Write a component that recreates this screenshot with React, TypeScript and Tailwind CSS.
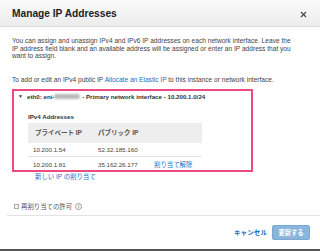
import { X } from 'lucide-react';

const sans = "font-['Liberation_Sans','Noto_Sans_CJK_JP',sans-serif]";

export default function App() {
  return (
    <div className={`w-[320px] h-[251px] bg-white flex flex-col overflow-hidden text-[#444] ${sans}`}>
      {/* Header */}
      <div className="h-[27px] shrink-0 flex items-center justify-between pl-[12px] pr-[12px] pt-[2px] bg-gradient-to-b from-[#fafafa] to-[#ececec] border-b border-[#dcdcdc]">
        <span className="text-[10.2px] font-bold text-[#222]">Manage IP Addresses</span>
        <X className="w-[9px] h-[9px] text-[#444]" strokeWidth={3} />
      </div>

      {/* Body */}
      <div className="flex-1 flex flex-col px-[12px]">
        <p className="mt-[10px] text-[6.6px] leading-[7.6px] whitespace-nowrap">
          You can assign and unassign IPv4 and IPv6 IP addresses on each network interface. Leave the<br />
          IP address field blank and an available address will be assigned or enter an IP address that you<br />
          want to assign.
        </p>
        <p className="mt-[16.5px] text-[6.6px] leading-[7.6px]">
          To add or edit an IPv4 public IP <span className="text-[#1c6ec4]">Allocate an Elastic IP</span> to this instance or network interface.
        </p>

        {/* Interface box */}
        <div className="mt-[5px] w-[241px] h-[83px] border-2 border-[#ec4a80] flex flex-col">
          <div className="flex items-center mt-[2px] h-[8px] text-[6.2px] font-bold text-[#333]">
            <span className="ml-[4px] mr-[4px] text-[5px]">▼</span>
            <span>eth0: eni-</span>
            <span className="inline-block w-[26px] h-[5px] bg-[#b9b9b9] blur-[1px] rounded-sm" />
            <span>&nbsp;- Primary network interface - 10.200.1.0/24</span>
          </div>
          <div className="ml-[14px] mt-[12px] text-[6.2px] font-bold text-[#333] leading-[8px]">IPv4 Addresses</div>
          <div className="ml-[14px] mt-[2px] w-[174px] flex flex-col">
            <div className="h-[20px] bg-[#eeeeee] flex items-center text-[6.5px] font-bold text-[#555]">
              <span className="ml-[7px] w-[63px]">プライベート IP</span>
              <span>パブリック IP</span>
            </div>
            <div className="h-[14px] flex items-center text-[6.2px] border-b border-[#e4e4e4]">
              <span className="ml-[5px] w-[65px]">10.200.1.54</span>
              <span>52.32.185.160</span>
            </div>
            <div className="h-[15px] flex items-center text-[6.2px]">
              <span className="ml-[5px] w-[65px]">10.200.1.81</span>
              <span className="w-[56px]">35.162.26.177</span>
              <span className="text-[#1c6ec4] text-[6.4px]">割り当て解除</span>
            </div>
          </div>
        </div>

        <div className="ml-[23px] mt-[1px] text-[6.4px] leading-[8px] text-[#1c6ec4]">新しい IP の割り当て</div>

        <div className="mt-[22px] flex items-center h-[8px] ml-[2px] text-[6.4px] text-[#555]">
          <span className="w-[5px] h-[5px] border border-[#aaa] bg-[#f4f4f4] mr-[2px]" />
          <span>再割り当ての許可</span>
          <span className="ml-[3px] w-[7px] h-[7px] rounded-full border border-[#999] text-[#888] text-[5px] font-bold flex items-center justify-center leading-none">i</span>
        </div>
      </div>

      {/* Footer */}
      <div className="mx-[7px] border-t border-[#e2e2e2] h-[34px] shrink-0 flex items-center justify-end pr-[11px] -mr-[1px]">
        <span className="text-[6.6px] font-bold text-[#1c6ec4] mr-[5px] mt-[1px]">キャンセル</span>
        <span className="w-[38px] h-[15px] rounded-[2px] bg-[#8ab6dc] border border-[#7aa8d2] text-white text-[6.3px] font-bold flex items-center justify-center">更新する</span>
      </div>
      <div className="h-[2px] shrink-0 bg-[#555]" />
    </div>
  );
}
